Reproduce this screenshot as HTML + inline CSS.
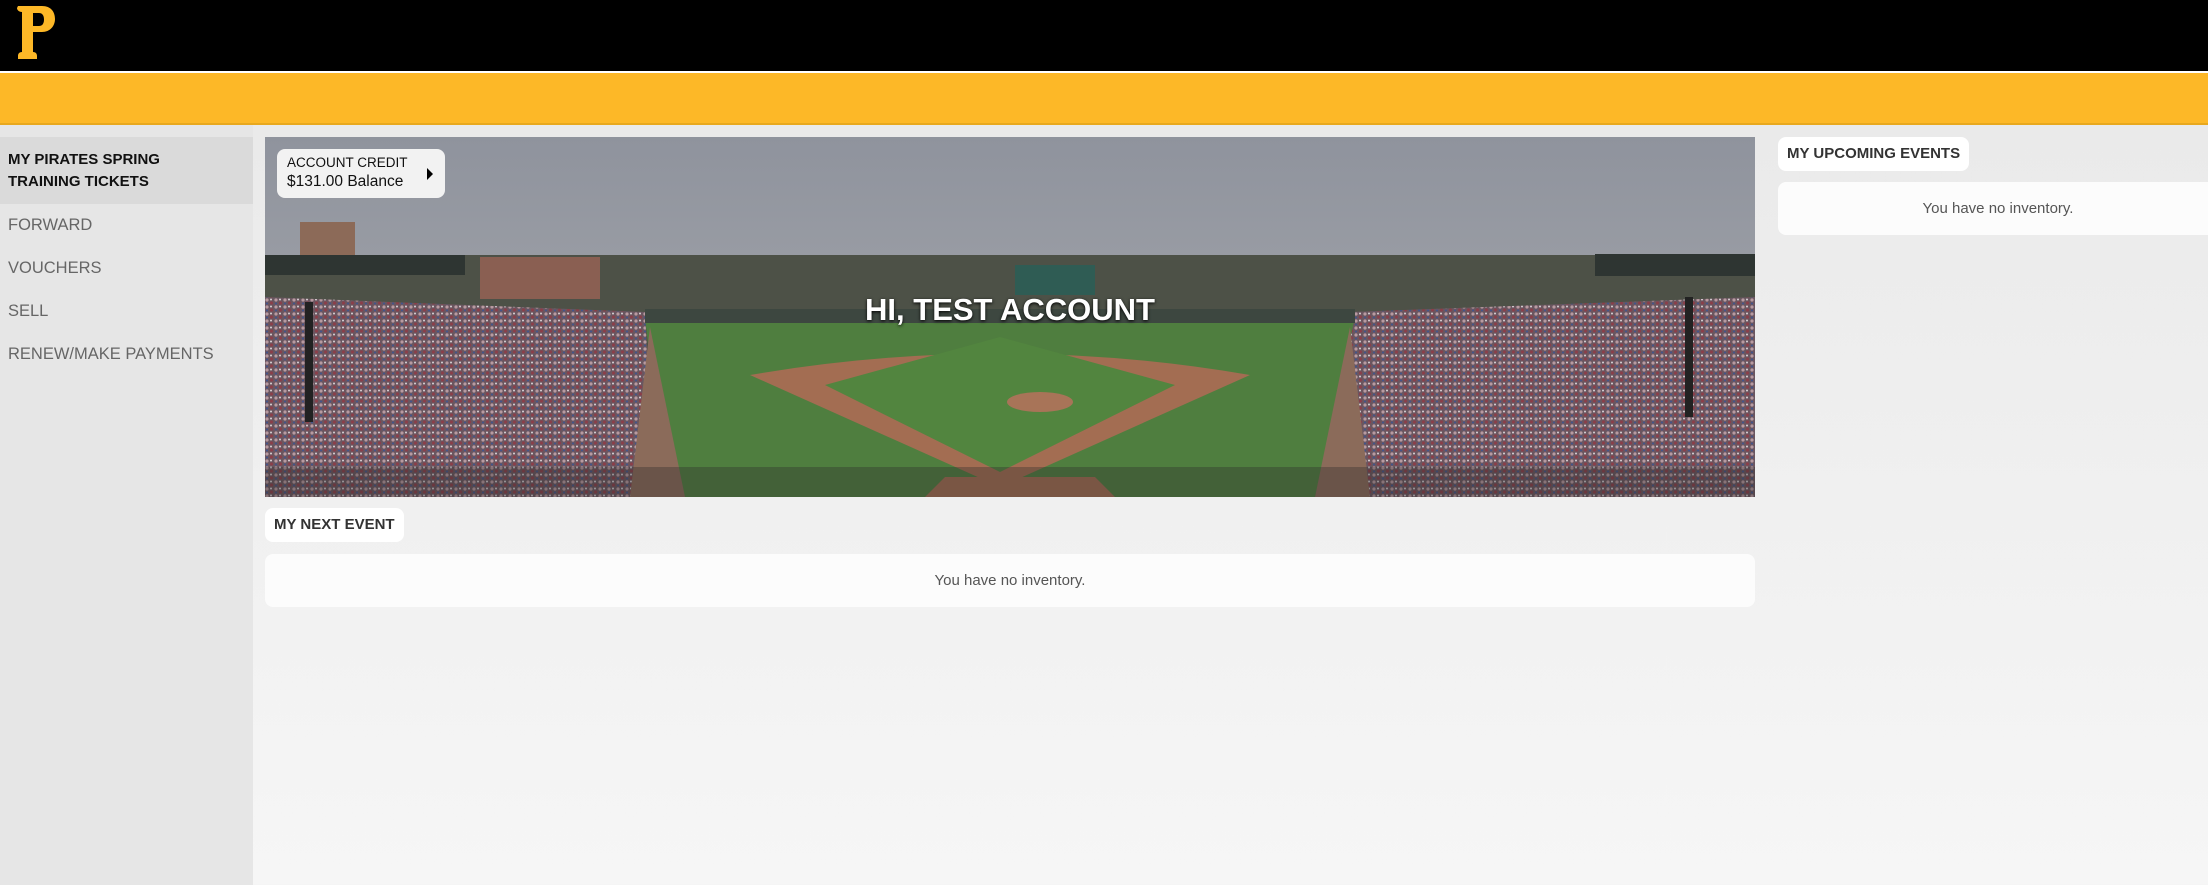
<!DOCTYPE html>
<html><head><meta charset="utf-8"><style>
*{margin:0;padding:0;box-sizing:border-box}
body{width:2208px;height:885px;overflow:hidden;font-family:"Liberation Sans",sans-serif;background:linear-gradient(#e8e8e8,#f6f6f6);position:relative}
.top{position:absolute;left:0;top:0;width:2208px;height:71px;background:#000}
.line{position:absolute;top:71px;left:0;width:2208px;height:2px;background:#fff}
.yel{position:absolute;top:73px;left:0;width:2208px;height:52px;background:#fdb827;border-bottom:2px solid #e8a81e}
.side{position:absolute;left:0;top:125px;width:253px;height:760px;background:#e6e6e6}
.act{position:absolute;left:0;top:137px;width:253px;height:67px;background:#dadada;padding:12px 8px;font-weight:bold;font-size:15px;line-height:22px;color:#111}
.mi{position:absolute;left:8px;font-size:16.5px;color:#666}
.hero{position:absolute;left:265px;top:137px;width:1490px;height:360px;overflow:hidden}
.lbl{position:absolute;background:#fff;border-radius:8px;font-weight:bold;font-size:15px;color:#333;padding:0 9px;line-height:34px}
.box{position:absolute;background:#fcfcfc;border-radius:8px;font-size:15px;color:#555;text-align:center}
</style></head><body>
<div class="top"></div>
<svg style="position:absolute;left:15px;top:4px" width="42" height="56" viewBox="0 0 42 56"><path d="M3 2h24c9 0 13 6 13 13s-5 13-13 13h-9v20c3 0 4 2 4 4v3H3v-3c0-2 1-4 4-4V8C4 8 2 6 2 4z M18 9v13h6c3 0 5-2 5-6.5S27 9 24 9z" fill="#fdb827" fill-rule="evenodd"/></svg>
<div class="line"></div><div class="yel"></div>
<div class="side"></div>
<div class="act">MY PIRATES SPRING<br>TRAINING TICKETS</div>
<div class="mi" style="top:216px">FORWARD</div>
<div class="mi" style="top:259px">VOUCHERS</div>
<div class="mi" style="top:302px">SELL</div>
<div class="mi" style="top:345px">RENEW/MAKE PAYMENTS</div>
<div class="hero">
<svg width="1490" height="360" viewBox="0 0 1490 360">
<defs><linearGradient id="sky" x1="0" y1="0" x2="0" y2="1"><stop offset="0" stop-color="#8f939d"/><stop offset="1" stop-color="#aaacb0"/></linearGradient>
<pattern id="dots" width="9" height="7" patternUnits="userSpaceOnUse"><rect width="9" height="7" fill="#6a5660"/><circle cx="2" cy="2" r="1.6" fill="#b89aa0"/><circle cx="6.5" cy="5" r="1.6" fill="#8a3f4a"/><circle cx="6" cy="1.5" r="1" fill="#d8d0d4"/><circle cx="2" cy="5.5" r="1" fill="#3f5590"/></pattern></defs>
<rect width="1490" height="360" fill="url(#sky)"/>
<rect y="118" width="1490" height="242" fill="#4d5147"/>
<rect x="215" y="120" width="120" height="42" fill="#8a5f52"/>
<rect x="35" y="85" width="55" height="35" fill="#8c6a58"/>
<path d="M0 160 L380 175 L390 360 L0 360Z" fill="url(#dots)"/>
<path d="M1490 160 L1085 175 L1070 360 L1490 360Z" fill="url(#dots)"/>
<rect x="0" y="118" width="200" height="20" fill="#2e3532"/>
<rect x="1330" y="117" width="160" height="22" fill="#2e3532"/>
<path d="M380 180 L1090 180 L1050 360 L400 360Z" fill="#4f7e3f"/>
<path d="M385 190 L420 360 L365 360Z M1085 190 L1050 360 L1105 360Z" fill="#8b6b5a"/>
<path d="M485 238 Q735 195 985 238 L735 350Z" fill="#a36d52"/>
<path d="M560 248 L735 200 L910 248 L735 335Z" fill="#52853f"/>
<ellipse cx="775" cy="265" rx="33" ry="10" fill="#a87458"/>
<path d="M680 340 L830 340 L850 360 L660 360Z" fill="#a36d52"/>
<rect x="750" y="128" width="80" height="30" fill="#2f5c54"/>
<rect x="380" y="172" width="710" height="14" fill="#3d4740"/>
<rect x="0" y="330" width="1490" height="30" fill="#2d2a2c" opacity=".35"/>
<rect x="40" y="165" width="8" height="120" fill="#222"/><rect x="1420" y="160" width="8" height="120" fill="#222"/>
</svg>
<div style="position:absolute;left:0;width:1490px;top:155px;text-align:center;color:#fff;font-weight:bold;font-size:31px;text-shadow:0 1px 3px #000">HI, TEST ACCOUNT</div>
<div style="position:absolute;left:12px;top:12px;width:168px;height:49px;background:#f2f2f2;border-radius:8px;padding:5px 10px;color:#111">
<div style="font-size:13.5px;line-height:18px">ACCOUNT CREDIT</div><div style="font-size:15.5px;line-height:20px">$131.00 Balance</div>
<div style="position:absolute;right:12px;top:19px;border-left:6px solid #000;border-top:6px solid transparent;border-bottom:6px solid transparent"></div></div>
</div>
<div class="lbl" style="left:265px;top:508px">MY NEXT EVENT</div>
<div class="box" style="left:265px;top:554px;width:1490px;height:53px;line-height:53px">You have no inventory.</div>
<div class="lbl" style="left:1778px;top:137px">MY UPCOMING EVENTS</div>
<div class="box" style="left:1778px;top:182px;width:440px;height:53px;line-height:53px">You have no inventory.</div>
</body></html>
